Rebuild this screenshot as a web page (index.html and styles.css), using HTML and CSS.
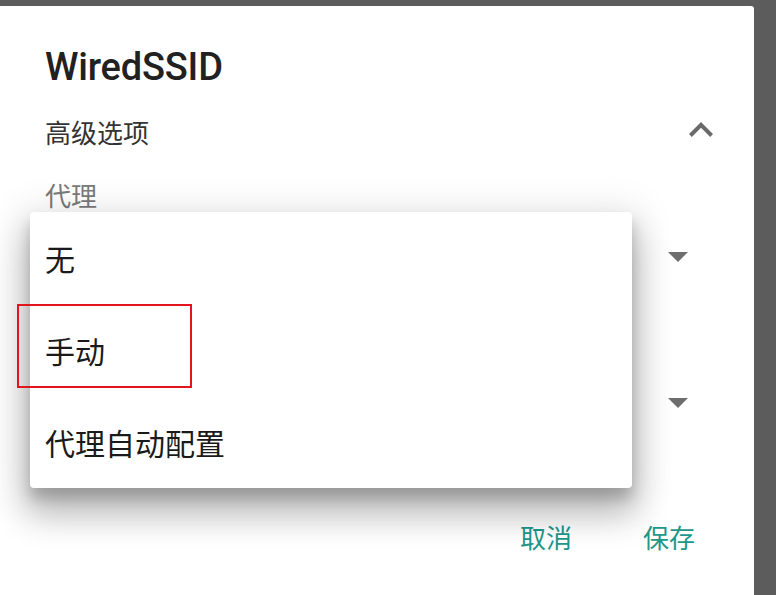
FILE: index.html
```html
<!DOCTYPE html>
<html lang="zh-CN">
<head>
<meta charset="utf-8">
<title>WiredSSID</title>
<link rel="stylesheet" href="styles.css">
</head>
<body>
<div class="dialog">
  <h1 class="title">WiredSSID</h1>
  <div class="adv-row">
    <span class="adv-label">高级选项</span>
    <svg class="chev" width="24" height="15" viewBox="6 8 12 7.41"><path d="M12 8l-6 6 1.41 1.41L12 10.83l4.59 4.58L18 14z" fill="#6a6a6a"/></svg>
  </div>
  <div class="field-label">代理</div>
  <div class="spinner">
    <svg class="drop" width="20" height="10" viewBox="7 10 10 5"><path d="M7 10l5 5 5-5z" fill="#6e6e6e"/></svg>
  </div>
  <div class="spacer"></div>
  <div class="spinner">
    <svg class="drop" width="20" height="10" viewBox="7 10 10 5"><path d="M7 10l5 5 5-5z" fill="#6e6e6e"/></svg>
  </div>
  <div class="actions">
    <button class="btn">取消</button>
    <button class="btn">保存</button>
  </div>

  <ul class="menu">
    <li class="menu-item">无</li>
    <li class="menu-item">手动</li>
    <li class="menu-item">代理自动配置</li>
  </ul>
  <div class="highlight"></div>
</div>
</body>
</html>
```

FILE: styles.css
```css
* { box-sizing: border-box; }
html, body { margin: 0; padding: 0; }
body {
  background: #5c5c5c;
  width: 776px;
  height: 595px;
  overflow: hidden;
  font-family: Roboto, "Noto Sans CJK SC", sans-serif;
}
.dialog {
  position: relative;
  margin-top: 6px;
  width: 754px;
  height: 589px;
  background: #ffffff;
  border-radius: 0 3px 0 0;
  padding: 39px 41px 0 45px;
  display: flex;
  flex-direction: column;
}
.title {
  margin: 0;
  font-family: Roboto, sans-serif;
  font-weight: 500;
  font-size: 38px;
  line-height: 44px;
  color: #212121;
  letter-spacing: -0.2px;
}
.adv-row {
  margin-top: 20px;
  height: 44px;
  display: flex;
  align-items: center;
  justify-content: space-between;
}
.adv-label {
  font-family: "Noto Sans CJK SC", sans-serif;
  font-size: 26px;
  color: #333333;
}
.chev { display: block; margin-top: -4px; }
.field-label {
  margin-top: 27px;
  height: 30px;
  line-height: 30px;
  font-family: "Noto Sans CJK SC", sans-serif;
  font-size: 26px;
  color: #7a7a7a;
}
.spinner {
  margin-top: 18px;
  height: 60px;
  display: flex;
  align-items: center;
  justify-content: flex-end;
  padding-right: 25px;
}
.spacer { height: 68px; }
.drop { display: block; margin-top: -2px; }
.actions {
  margin-top: 86px;
  display: flex;
  justify-content: flex-end;
  gap: 71px;
  padding-right: 18px;
}
.btn {
  border: none;
  background: none;
  padding: 0;
  font-family: "Noto Sans CJK SC", sans-serif;
  font-size: 26px;
  line-height: 34px;
  color: #21978a;
}
.menu {
  position: absolute;
  left: 30px;
  top: 206px;
  width: 602px;
  height: 276px;
  margin: 0;
  padding: 0;
  list-style: none;
  background: #ffffff;
  border-radius: 4px;
  box-shadow: 0 24px 34px 4px rgba(0,0,0,0.24), 0 10px 14px rgba(0,0,0,0.18), 0 4px 36px 12px rgba(0,0,0,0.07);
}
.menu-item {
  height: 92px;
  display: flex;
  align-items: center;
  padding-left: 15px;
  font-family: "Noto Sans CJK SC", sans-serif;
  font-size: 30px;
  color: #1a1a1a;
}
.highlight {
  position: absolute;
  left: 17px;
  top: 298px;
  width: 175px;
  height: 84px;
  border: 2px solid #e3141c;
}
```
